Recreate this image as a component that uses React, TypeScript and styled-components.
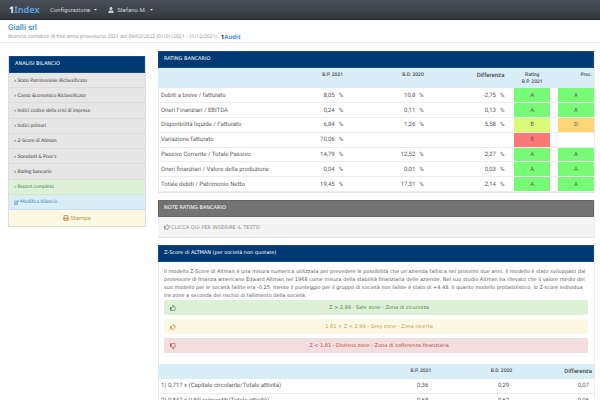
import React from "react";
import styled, { createGlobalStyle, css } from "styled-components";
import {
  FaCaretDown,
  FaPrint,
  FaRegEdit,
  FaRegHandPointRight,
  FaRegThumbsDown,
  FaRegThumbsUp,
  FaUser,
} from "react-icons/fa";

const Global = createGlobalStyle`
  * { box-sizing: border-box; }
  body {
    margin: 0;
    background: #fff;
    color: #5c5c5c;
    font-family: "DejaVu Sans", sans-serif;
    font-size: 5px;
    line-height: 8px;
    text-rendering: geometricPrecision;
  }
  button { font: inherit; border: 0; background: none; padding: 0; cursor: pointer; }
  a { color: inherit; text-decoration: none; }
  svg { display: block; flex: none; }
`;

const Navbar = styled.nav`
  display: flex;
  align-items: center;
  height: 20px;
  padding: 0 9px;
  background: linear-gradient(#4a4f58, #3e4349 60%, #303438);
  border-bottom: 1px solid #25282b;
`;

const Logo = styled.a`
  width: 41px;
  color: #5b9bd8;
  font: 700 9px/18px "Noto Sans", sans-serif;
`;

const LogoDigit = styled.span<{ $dark?: boolean }>`
  color: ${(p) => (p.$dark ? "#222" : "#fff")};
`;

const NavButton = styled.button`
  display: flex;
  align-items: center;
  gap: 3px;
  margin-right: 10px;
  color: #d0d0d0;
  font-family: Roboto, sans-serif;
  font-size: 6px;
`;

const PageHeader = styled.header`
  padding: 3px 8px 0;
  border-bottom: 1px solid #eaeaea;
`;

const Title = styled.h1`
  margin: 0;
  color: #3f8fbd;
  font-family: Roboto, sans-serif;
  font-size: 8px;
  font-weight: 500;
  line-height: 10px;
`;

const Subtitle = styled.p`
  display: flex;
  gap: 4px;
  margin: 0;
  color: #949494;
  font-family: "Noto Sans", sans-serif;
  font-size: 5px;
  line-height: 9px;
`;

const Audit = styled.a`
  color: #4a8fd0;
  font: 700 6px/9px "Noto Sans", sans-serif;
`;

const Layout = styled.div`
  display: grid;
  grid-template-columns: 138fr 437fr;
  gap: 12px;
  align-items: start;
  padding: 8px 5px 0 8px;
`;

const Sidebar = styled.aside`
  margin-top: 5px;
  border: 1px solid #ddd;
  border-top: 0;
`;

const PanelHeading = styled.h2<{ $grey?: boolean }>`
  margin: 0;
  padding: 0 5px;
  border: 1px solid ${(p) => (p.$grey ? "#666" : "#1c4a80")};
  background: ${(p) => (p.$grey ? "#737373" : "#003a75")};
  color: #fff;
  font-size: 5px;
  font-weight: 400;
  line-height: 15px;
`;

const Menu = styled.ul`
  display: grid;
  grid-auto-rows: 1fr;
  min-height: 137px;
  margin: 0;
  padding: 0;
  list-style: none;
`;

type Tone = "plain" | "success" | "info" | "warning" | "danger";

const tones: Record<Tone, { bg: string; line: string; text: string }> = {
  plain: { bg: "#e6e6e6", line: "#dadada", text: "#444" },
  success: { bg: "#dff0d8", line: "#d2e6c8", text: "#468847" },
  info: { bg: "#d9edf7", line: "#c5e0ec", text: "#3a87ad" },
  warning: { bg: "#fcf8e3", line: "#f0e6c8", text: "#c09853" },
  danger: { bg: "#f2dede", line: "#ecd0d4", text: "#b94a48" },
};

const tone = css<{ $tone: Tone }>`
  background: ${(p) => tones[p.$tone].bg};
  color: ${(p) => tones[p.$tone].text};
`;

const MenuItem = styled.li<{ $tone: Tone }>`
  ${tone}
  display: grid;
  border-bottom: 1px solid ${(p) => tones[p.$tone].line};
`;

const MenuLink = styled.a`
  display: flex;
  align-items: center;
  gap: 1px;
  padding: 1px 5px 0;
  font-family: Lato, sans-serif;
`;

const PrintButton = styled.button`
  display: flex;
  align-items: center;
  justify-content: center;
  gap: 1px;
  width: 100%;
  height: 16px;
  background: #fcf8e3;
  color: #c09853;
  font-family: Roboto, sans-serif;
  font-size: 6px;
`;

const Main = styled.main`
  display: grid;
  gap: 7px;
`;

const Panel = styled.section`
  border-right: 1px solid #ececec;
  border-bottom: 1px solid #e4e4e4;
  box-shadow: inset 1px 0 #ececec;
`;

const Table = styled.table<{ $tall?: boolean }>`
  width: 100%;
  height: ${(p) => (p.$tall ? "124px" : "auto")};
  table-layout: fixed;
  border-collapse: collapse;
  font-family: Roboto, sans-serif;
  font-size: 6px;
`;

const HeadCell = styled.th<{ $large?: boolean; $center?: boolean; $tall?: boolean }>`
  height: ${(p) => (p.$tall ? "20px" : "15px")};
  padding: 4px 2px 0;
  background: #d9edf7;
  color: #484d50;
  font-size: ${(p) => (p.$large ? "6px" : "5px")};
  font-weight: 500;
  line-height: 7px;
  text-align: ${(p) => (p.$center ? "center" : "right")};
  vertical-align: top;
`;

const ValueRow = styled.tr`
  height: 14px;
`;

const cell = css`
  padding: 1px 3px 0;
  border-bottom: 1px solid #ececec;
  white-space: nowrap;
`;

const NameCell = styled.th`
  ${cell}
  font-weight: 400;
  text-align: left;
`;

const ValueCell = styled.td<{ $inset?: boolean }>`
  ${cell}
  padding-right: ${(p) => (p.$inset ? "5px" : "2px")};
  text-align: right;
`;

const Unit = styled.span`
  margin-left: 4px;
`;

const grades: Record<string, string> = {
  A: "#77fb77",
  B: "#d9fb77",
  D: "#fdd777",
  E: "#fd7777",
};

const GradeCell = styled.td<{ $grade?: string }>`
  ${cell}
  background: ${(p) => (p.$grade ? grades[p.$grade] : "#fff")};
  text-align: center;
`;

const NoteBody = styled.div`
  padding: 6px;
  background: #f4f4f4;
`;

const NoteButton = styled.button`
  display: flex;
  align-items: center;
  gap: 1px;
  color: #8e8e8e;
`;

const Description = styled.div`
  padding: 6px 6px 11px;
`;

const Paragraph = styled.p`
  margin: 0;
`;

const Zones = styled.div`
  display: grid;
  gap: 4px;
`;

const Zone = styled.div<{ $tone: Tone }>`
  ${tone}
  display: grid;
  grid-template-columns: 6px 1fr;
  align-items: center;
  height: 15px;
  padding: 0 6px;
  border-radius: 2px;
  text-align: center;
`;

const menu = [
  "Stato Patrimoniale Riclassificato",
  "Conto Economico Riclassificato",
  "Indici codice della crisi di impresa",
  "Indici primari",
  "Z-Score di Altman",
  "Standard & Poor's",
  "Rating bancario",
];

const ratings = [
  ["Debiti a breve / fatturato", "8,05", "10,8", "-2,75", "A", "A"],
  ["Oneri Finanziari / EBITDA", "0,24", "0,11", "0,13", "A", "A"],
  ["Disponbilità liquide / Fatturato", "6,84", "1,26", "5,58", "B", "D"],
  ["Variazione fatturato", "70,06", "", "", "E", ""],
  ["Passivo Corrente / Totale Passivo", "14,79", "12,52", "2,27", "A", "A"],
  ["Oneri finanziari / Valore della produzione", "0,04", "0,01", "0,03", "A", "A"],
  ["Totale debiti / Patrimonio Netto", "19,45", "17,31", "2,14", "A", "A"],
];

const scores = [
  ["1) 0,717 x (Capitale circolante/Totale attività)", "0,36", "0,29", "0,07"],
  ["2) 0,847 x (Utili reinvestiti/Totale attività)", "0,68", "0,62", "0,06"],
];

const Columns = ({ widths }: { widths: number[] }) => {
  const total = widths.reduce((a, b) => a + b, 0);
  return (
    <colgroup>
      {widths.map((w, i) => (
        <col key={i} style={{ width: `${(w / total) * 100}%` }} />
      ))}
    </colgroup>
  );
};

const Percent = ({ value }: { value: string }) => (
  <ValueCell>
    {value}
    {value && <Unit>%</Unit>}
  </ValueCell>
);

export default function App() {
  return (
    <>
      <Global />
      <Navbar>
        <Logo href="#">
          <LogoDigit>1</LogoDigit>Index
        </Logo>
        <NavButton>
          Configurazione <FaCaretDown size={5} />
        </NavButton>
        <NavButton>
          <FaUser size={6} /> Stefano M. <FaCaretDown size={5} />
        </NavButton>
      </Navbar>
      <PageHeader>
        <Title>Gialli srl</Title>
        <Subtitle>
          Bilancio contabile di fine anno provvisorio 2021 del 09/02/2022 (01/01/2021 - 31/12/2021)
          <Audit href="#">
            <LogoDigit $dark>1</LogoDigit>Audit
          </Audit>
        </Subtitle>
      </PageHeader>
      <Layout>
        <Sidebar>
          <PanelHeading>ANALISI BILANCIO</PanelHeading>
          <Menu>
            {menu.map((label) => (
              <MenuItem key={label} $tone="plain">
                <MenuLink href="#">» {label}</MenuLink>
              </MenuItem>
            ))}
            <MenuItem $tone="success">
              <MenuLink href="#">» Report completo</MenuLink>
            </MenuItem>
            <MenuItem $tone="info">
              <MenuLink href="#">
                <FaRegEdit size={5} /> Modifica bilancio
              </MenuLink>
            </MenuItem>
          </Menu>
          <PrintButton>
            <FaPrint size={6} /> Stampa
          </PrintButton>
        </Sidebar>
        <Main>
          <Panel>
            <PanelHeading>RATING BANCARIO</PanelHeading>
            <Table $tall>
              <Columns widths={[103, 85, 81, 81, 8, 36, 8, 36]} />
              <thead>
                <tr>
                  <HeadCell as="td" $tall />
                  <HeadCell scope="col">B.P. 2021</HeadCell>
                  <HeadCell scope="col">B.D. 2020</HeadCell>
                  <HeadCell scope="col" $large>Differenza</HeadCell>
                  <HeadCell as="td" />
                  <HeadCell scope="col" $center>
                    Rating
                    <br />
                    B.P. 2021
                  </HeadCell>
                  <HeadCell as="td" />
                  <HeadCell scope="col">Prec.</HeadCell>
                </tr>
              </thead>
              <tbody>
                {ratings.map(([name, current, previous, delta, grade, before]) => (
                  <ValueRow key={name}>
                    <NameCell scope="row">{name}</NameCell>
                    <Percent value={current} />
                    <Percent value={previous} />
                    <Percent value={delta} />
                    <GradeCell />
                    <GradeCell $grade={grade}>{grade}</GradeCell>
                    <GradeCell />
                    <GradeCell $grade={before}>{before}</GradeCell>
                  </ValueRow>
                ))}
              </tbody>
            </Table>
          </Panel>
          <Panel>
            <PanelHeading $grey>NOTE RATING BANCARIO</PanelHeading>
            <NoteBody>
              <NoteButton>
                <FaRegHandPointRight size={6} /> CLICCA QUI PER INSERIRE IL TESTO
              </NoteButton>
            </NoteBody>
          </Panel>
          <Panel>
            <PanelHeading>Z-Score di ALTMAN (per società non quotate)</PanelHeading>
            <Description>
              <Paragraph>
                Il modello Z-Score di Altman è una misura numerica utilizzata per prevedere le
                possibilità che un'azienda fallisca nei prossimi due anni. Il modello è stato
                sviluppato dal professore di finanza americano Edward Altman nel 1968 come misura
                della stabilità finanziaria delle aziende. Nel suo studio Altman ha rilevato che il
                valore medio del suo modello per le società fallite era -0,25, mente il punteggio
                per il gruppo di società non fallite è stato di +4,48. Il quanto modello
                probabilistico, lo Z-score individua tre zone a seconda del rischio di fallimento
                della società:
              </Paragraph>
              <Zones>
                <Zone $tone="success">
                  <FaRegThumbsUp size={6} /> Z &gt; 2,99 - Safe zone - Zona di sicurezza
                </Zone>
                <Zone $tone="warning">
                  <FaRegHandPointRight size={6} /> 1,81 &lt; Z &lt; 2,99 - Grey zone - Zona incerta
                </Zone>
                <Zone $tone="danger">
                  <FaRegThumbsDown size={6} /> Z &lt; 1,81 - Distress zone - Zona di sofferenza
                  finanziaria
                </Zone>
              </Zones>
            </Description>
            <Table>
              <Columns widths={[195, 81, 81, 80]} />
              <thead>
                <tr>
                  <HeadCell as="td" />
                  <HeadCell scope="col">B.P. 2021</HeadCell>
                  <HeadCell scope="col">B.D. 2020</HeadCell>
                  <HeadCell scope="col" $large>Differenza</HeadCell>
                </tr>
              </thead>
              <tbody>
                {scores.map(([name, current, previous, delta]) => (
                  <ValueRow key={name}>
                    <NameCell scope="row">{name}</NameCell>
                    <ValueCell $inset>{current}</ValueCell>
                    <ValueCell $inset>{previous}</ValueCell>
                    <ValueCell $inset>{delta}</ValueCell>
                  </ValueRow>
                ))}
              </tbody>
            </Table>
          </Panel>
        </Main>
      </Layout>
    </>
  );
}
